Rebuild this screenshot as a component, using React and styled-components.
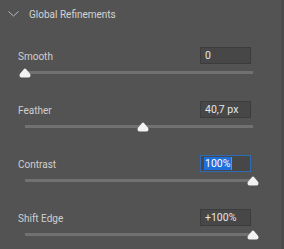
import React from 'react'
import styled, { createGlobalStyle } from 'styled-components'

const Global = createGlobalStyle`
  html, body { margin: 0; padding: 0; background: #535353; }
  body { font-family: Roboto, "Noto Sans", sans-serif; }
`

const Panel = styled.div`
  width: 284px;
  height: 249px;
  background: #535353;
  border-right: 3px solid #4b4b4b;
  box-sizing: border-box;
  overflow: hidden;
`

const Header = styled.div`
  display: flex;
  align-items: center;
  height: 28px;
  padding-left: 7px;
  gap: 9px;
  color: #d4d4d4;
  font-size: 10px;
`

const List = styled.div`
  display: flex;
  flex-direction: column;
  gap: 26px;
  padding: 19px 30px 0 18px;
`

const Row = styled.div`
  display: flex;
  flex-direction: column;
  gap: 5px;
`

const Top = styled.div`
  display: flex;
  justify-content: space-between;
  align-items: center;
  height: 17px;
`

const Label = styled.span`
  color: #cfcfcf;
  font-size: 10px;
  padding-top: 1px;
`

const Field = styled.div`
  width: 51px;
  height: 17px;
  box-sizing: border-box;
  background: #474747;
  border: 1px solid ${p => (p.$focus ? '#2f6bb5' : '#3c3c3c')};
  display: flex;
  align-items: center;
  padding-left: 4px;
  color: #e6e6e6;
  font-size: 10.5px;
`

const Selected = styled.span`
  background: #1e6fd9;
  color: #fff;
  padding: 0 1px 0 1px;
  margin-left: -1px;
  border-right: 1px solid #e86a3a;
`

const Slider = styled.div`
  position: relative;
  margin-left: 7px;
  width: 228px;
  height: 6px;
  display: flex;
  align-items: center;
`

const Track = styled.div`
  width: 100%;
  height: 3px;
  background: #717171;
`

const Thumb = styled.svg`
  position: absolute;
  top: -1px;
  transform: translateX(-50%);
`

const rows = [
  { label: 'Smooth', value: '0', pos: 0 },
  { label: 'Feather', value: '40,7 px', pos: 0.516 },
  { label: 'Contrast', value: '100%', pos: 1, focus: true },
  { label: 'Shift Edge', value: '+100%', pos: 1 },
]

export default function App() {
  return (
    <Panel>
      <Global />
      <Header>
        <svg width="13" height="8" viewBox="0 0 13 8">
          <path d="M1.5 1.5 L6.5 6 L11.5 1.5" fill="none" stroke="#b8b8b8" strokeWidth="1" />
        </svg>
        <span>Global Refinements</span>
      </Header>
      <List>
        {rows.map(r => (
          <Row key={r.label}>
            <Top>
              <Label>{r.label}</Label>
              <Field $focus={r.focus}>
                {r.focus ? <Selected>{r.value}</Selected> : r.value}
              </Field>
            </Top>
            <Slider>
              <Track />
              <Thumb width="12" height="10" viewBox="0 0 12 10" style={{ left: `${r.pos * 100}%` }}>
                <path d="M6 0.5 Q6.6 0.5 7.2 1.3 L10.6 5.2 Q11.5 6.2 11.5 7.5 Q11.5 9.5 9.5 9.5 L2.5 9.5 Q0.5 9.5 0.5 7.5 Q0.5 6.2 1.4 5.2 L4.8 1.3 Q5.4 0.5 6 0.5 Z" fill="#f2f2f2" />
              </Thumb>
            </Slider>
          </Row>
        ))}
      </List>
    </Panel>
  )
}
